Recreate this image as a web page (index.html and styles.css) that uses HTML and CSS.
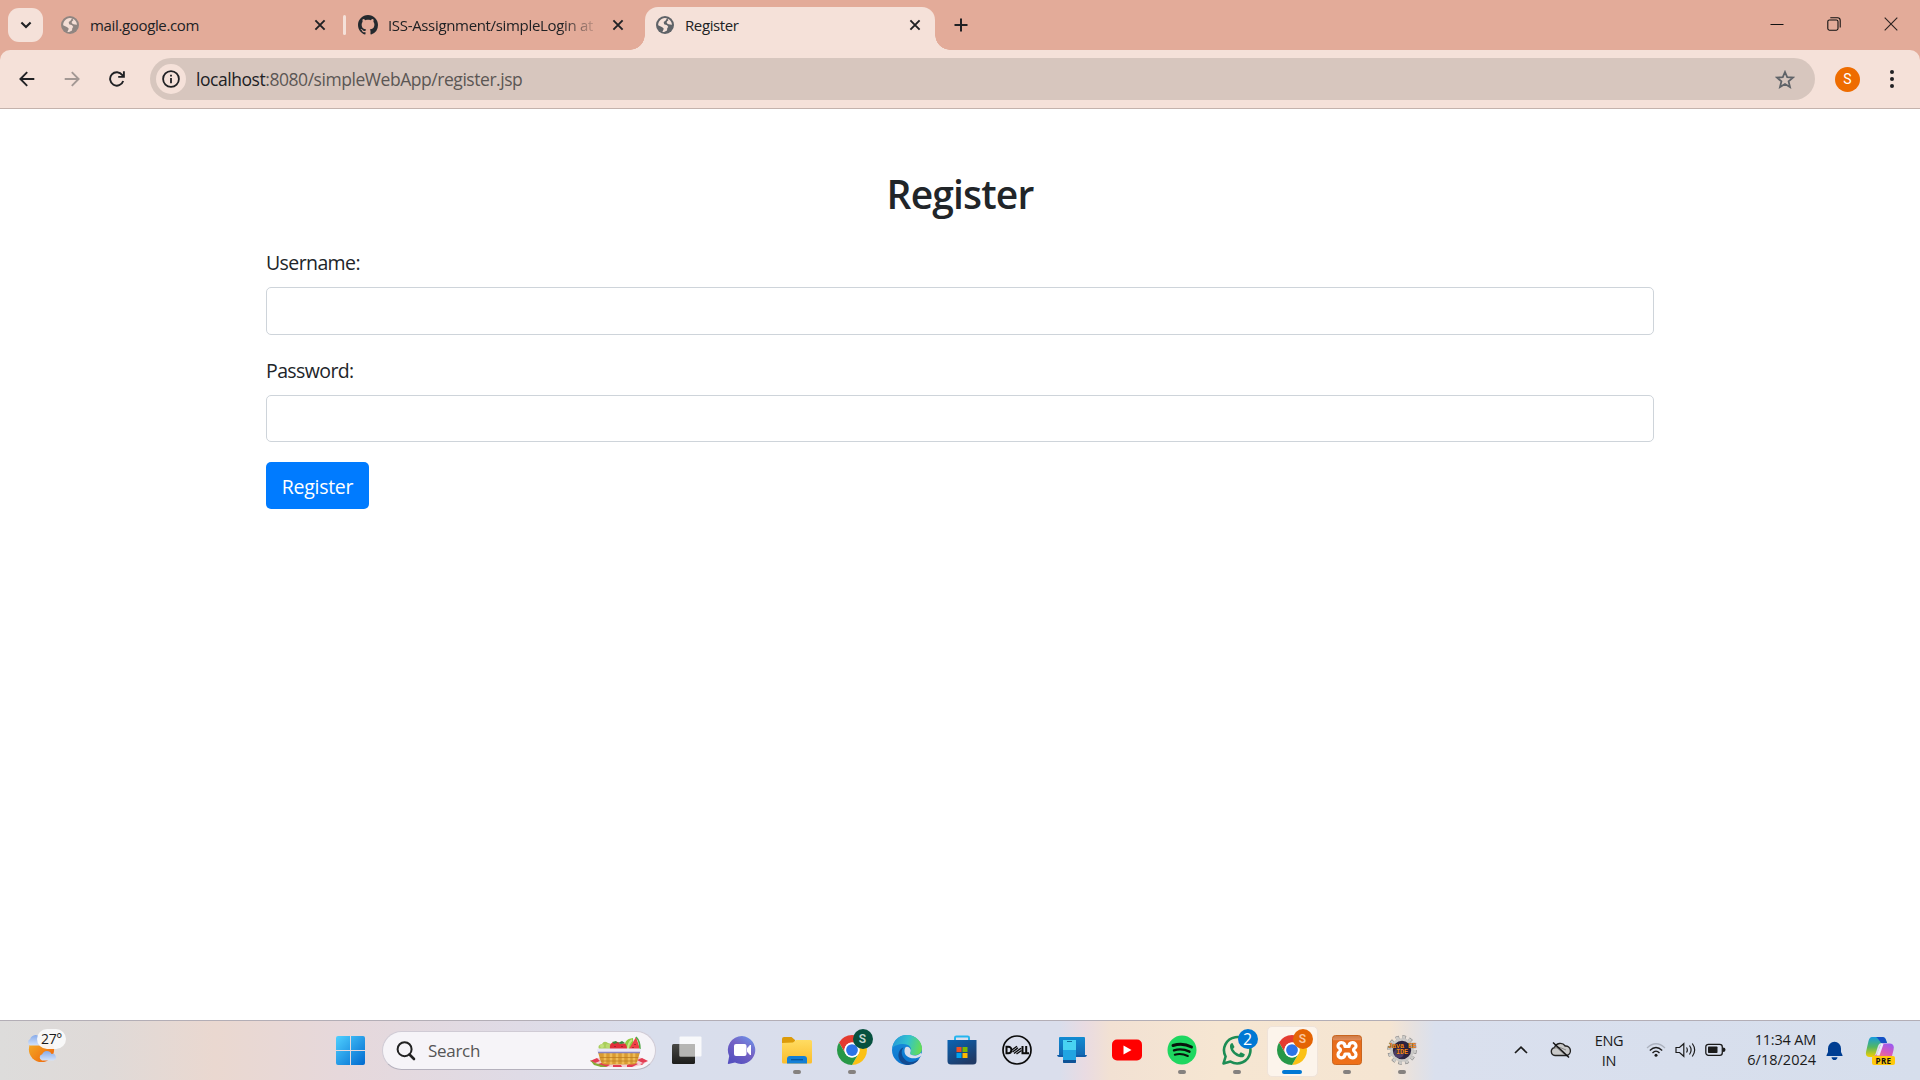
FILE: index.html
```html
<!DOCTYPE html>
<html lang="en">
<head>
<meta charset="utf-8">
<title>Register</title>
<link rel="stylesheet" href="styles.css">
</head>
<body>
<svg class="defs" width="0" height="0" aria-hidden="true">
  <defs>
    <linearGradient id="win" x1="0" y1="0" x2="1" y2="1"><stop offset="0" stop-color="#4fd0ff"/><stop offset="1" stop-color="#0069cf"/></linearGradient>
    <linearGradient id="sun" x1="0" y1="0" x2="1" y2="1"><stop offset="0" stop-color="#f5b62c"/><stop offset="1" stop-color="#ee5f08"/></linearGradient>
    <linearGradient id="cloud" x1="0" y1="0" x2="0" y2="1"><stop offset="0" stop-color="#87abea"/><stop offset="1" stop-color="#d3e2fa"/></linearGradient>
    <linearGradient id="dark" x1="0" y1="0" x2="0" y2="1"><stop offset="0" stop-color="#484846"/><stop offset="1" stop-color="#1d1d1b"/></linearGradient>
    <linearGradient id="chat" x1="1" y1="0" x2="0.3" y2="1"><stop offset="0" stop-color="#6b9cf0"/><stop offset=".5" stop-color="#7563c5"/><stop offset="1" stop-color="#5650bf"/></linearGradient>
    <linearGradient id="folder" x1="0" y1="0" x2="0" y2="1"><stop offset="0" stop-color="#ffdc62"/><stop offset="1" stop-color="#fbbd2b"/></linearGradient>
    <linearGradient id="edgeTop" x1="0" y1="0.3" x2="1" y2="0.5"><stop offset="0" stop-color="#2699d9"/><stop offset=".5" stop-color="#32c2cf"/><stop offset="1" stop-color="#65dd55"/></linearGradient>
    <linearGradient id="edgeBody" x1="0" y1="0" x2="0" y2="1"><stop offset="0" stop-color="#1b8fdb"/><stop offset="1" stop-color="#0b73ce"/></linearGradient>
    <linearGradient id="store" x1="0" y1="0" x2="0.6" y2="1"><stop offset="0" stop-color="#0a64b4"/><stop offset="1" stop-color="#203a66"/></linearGradient>
    <linearGradient id="pc" x1="0" y1="0" x2="0" y2="1"><stop offset="0" stop-color="#118bd2"/><stop offset="1" stop-color="#1267b2"/></linearGradient>
    <linearGradient id="cop1" x1="0" y1="0" x2="0" y2="1"><stop offset="0" stop-color="#169bde"/><stop offset=".5" stop-color="#52b763"/><stop offset="1" stop-color="#f5d000"/></linearGradient>
    <linearGradient id="cop2" x1="0.8" y1="0" x2="0.3" y2="1"><stop offset="0" stop-color="#9a5bf0"/><stop offset=".5" stop-color="#d758bb"/><stop offset="1" stop-color="#fa8367"/></linearGradient>
    <linearGradient id="xampp" x1="0" y1="0" x2="0" y2="1"><stop offset="0" stop-color="#cc7a45"/><stop offset=".14" stop-color="#e08b58"/><stop offset=".18" stop-color="#e66c1c"/><stop offset="1" stop-color="#ef7018"/></linearGradient>
    <symbol id="globe" viewBox="0 0 18 18"><circle cx="9" cy="9" r="9" fill="currentColor"/><path class="globe-land" d="M8.8 1.9 11 2.2 9.7 4.6 7.7 5.9 8.1 8.2 11.1 9.2 12.3 10.9 11.3 12 11 14.6 8.1 16.1 6.4 15.9 7.8 12.8 6.3 11.2 2.2 9.3C1.9 5.6 4.9 2.1 8.8 1.9ZM11.4 2.6C14 3.5 15.9 6.1 16 8.8L14 8.5 11.7 8 10.6 6.5 11.1 5.2 12.4 4.2Z"/></symbol>
    <symbol id="close" viewBox="0 0 12 12"><path d="M1.4 1.4 10.6 10.6M10.6 1.4 1.4 10.6" stroke="#202124" stroke-width="1.9" fill="none"/></symbol>
    <symbol id="chrome" viewBox="0 0 48 48"><circle cx="24" cy="24" r="23" fill="#fff"/><path fill="#e43b30" d="M3.22 12A24 24 0 0 1 44.78 12H24A12 12 0 0 0 13.6 30Z"/><path fill="#fbc116" d="M44.78 12A24 24 0 0 1 24 48L34.4 30A12 12 0 0 0 24 12Z"/><path fill="#279847" d="M24 48A24 24 0 0 1 3.22 12L13.6 30A12 12 0 0 0 34.4 30Z"/><circle cx="24" cy="24" r="12" fill="#fff"/><circle cx="24" cy="24" r="9.4" fill="#2d74e8"/></symbol>
  </defs>
</svg>

<header class="browser">
  <div class="tabstrip">
    <button class="tab-search"><svg width="12" height="8" viewBox="0 0 12 8"><path d="M1.4 1.4 6 6 10.6 1.4" fill="none" stroke="#202124" stroke-width="2.1"/></svg></button>
    <div class="tab tab-mail">
      <svg class="favicon muted" width="18" height="18"><use href="#globe"/></svg>
      <span class="tab-title t-mail">mail.google.com</span>
      <svg class="tab-close" width="12" height="12"><use href="#close"/></svg>
    </div>
    <i class="tab-sep"></i>
    <div class="tab tab-git">
      <svg class="favicon" width="20" height="20" viewBox="0 0 16 16"><path fill="#24292e" d="M8 0C3.58 0 0 3.58 0 8c0 3.54 2.29 6.53 5.47 7.59.4.07.55-.17.55-.38 0-.19-.01-.82-.01-1.49-2.01.37-2.53-.49-2.69-.94-.09-.23-.48-.94-.82-1.13-.28-.15-.68-.52-.01-.53.63-.01 1.08.58 1.23.82.72 1.21 1.87.87 2.33.66.07-.52.28-.87.51-1.07-1.78-.2-3.64-.89-3.64-3.95 0-.87.31-1.59.82-2.15-.08-.2-.36-1.02.08-2.12 0 0 .67-.21 2.2.82.64-.18 1.32-.27 2-.27s1.36.09 2 .27c1.53-1.04 2.2-.82 2.2-.82.44 1.1.16 1.92.08 2.12.51.56.82 1.27.82 2.15 0 3.07-1.87 3.75-3.65 3.95.29.25.54.73.54 1.48 0 1.07-.01 1.93-.01 2.2 0 .21.15.46.55.38A8.01 8.01 0 0 0 16 8c0-4.42-3.58-8-8-8z"/></svg>
      <span class="tab-title t-git">ISS-Assignment/simpleLogin at</span>
      <svg class="tab-close" width="12" height="12"><use href="#close"/></svg>
    </div>
    <div class="tab tab-active">
      <svg class="favicon" width="18" height="18"><use href="#globe"/></svg>
      <span class="tab-title t-reg">Register</span>
      <svg class="tab-close" width="12" height="12"><use href="#close"/></svg>
    </div>
    <svg class="new-tab" width="14" height="14" viewBox="0 0 14 14"><path d="M7 .5V13.5M.5 7H13.5" stroke="#202124" stroke-width="2"/></svg>
    <div class="window-controls">
      <svg width="14" height="14" viewBox="0 0 14 14"><path d="M.5 7.5H13.5" stroke="#111"/></svg>
      <svg width="14" height="14" viewBox="0 0 14 14" fill="none" stroke="#111" stroke-width="1.1"><rect x=".8" y="3" width="10.2" height="10.2" rx="1.6"/><path d="M3.3 .8H10.6Q13.2 .8 13.2 3.4V10.6"/></svg>
      <svg width="14" height="14" viewBox="0 0 14 14"><path d="M.7 .7 13.3 13.3M13.3 .7 .7 13.3" stroke="#2a2220" stroke-width="1.1"/></svg>
    </div>
  </div>
  <div class="toolbar">
    <nav class="nav-buttons">
      <svg width="16" height="16" viewBox="0 0 16 16" fill="none" stroke="#202124" stroke-width="1.9"><path d="M15.3 8H1.5M8.2 1.2 1.4 8 8.2 14.8"/></svg>
      <svg width="16" height="16" viewBox="0 0 16 16" fill="none" stroke="#a39894" stroke-width="1.9"><path d="M.7 8H14.500M7.800 1.200 14.600 8 7.800 14.800"/></svg>
      <svg width="16" height="16" viewBox="0 0 16 16" fill="none" stroke="#202124" stroke-width="1.9"><path d="M14.200 10A6.700 6.700 0 1 1 13.300 4.100L14.700 5.600M14.900 .3V5.900H9.200"/></svg>
    </nav>
    <div class="omnibox">
      <span class="site-info"><svg width="18" height="18" viewBox="0 0 18 18"><circle cx="9" cy="9" r="7.9" fill="none" stroke="#202124" stroke-width="1.8"/><path d="M9 8V13.2M9 4.8V6.6" stroke="#202124" stroke-width="1.8"/></svg></span>
      <span class="url"><b>localhost</b>:8080/simpleWebApp/register.jsp</span>
      <svg class="star" width="20" height="19" viewBox="0 0 20 19"><path d="M10 2 12.200 7.100 18 7.600 13.600 11.400 15 17 10 14 5 17 6.400 11.400 2 7.600 7.800 7.100Z" fill="none" stroke="#5f6368" stroke-width="1.800"/></svg>
    </div>
    <span class="avatar">S</span>
    <svg class="menu" width="6" height="20" viewBox="0 0 6 20" fill="#202124"><circle cx="3" cy="3" r="2"/><circle cx="3" cy="10" r="2"/><circle cx="3" cy="17" r="2"/></svg>
  </div>
</header>

<main class="page">
  <form class="register-form">
    <h2>Register</h2>
    <label for="username" class="l-user">Username:</label>
    <input id="username" type="text">
    <label for="password" class="l-pass">Password:</label>
    <input id="password" type="password">
    <button type="button">Register</button>
  </form>
</main>

<footer class="taskbar">
  <div class="weather">
    <svg width="32" height="30" viewBox="0 0 32 30"><circle cx="15.500" cy="15.500" r="12.600" fill="url(#sun)"/><path d="M4 11.500a3.600 3.600 0 0 1 .2-6.500A6 6 0 0 1 15 4l1 7.500Z" fill="url(#cloud)"/><path d="M16 26.500a3.200 3.200 0 0 1 .2-6.200 5 5 0 0 1 9.300-.3 3.300 3.300 0 0 1 2 6.500Z" fill="url(#cloud)"/></svg>
    <span class="temp">27°</span>
  </div>
  <svg class="start" width="29" height="29" viewBox="0 0 29 29"><g fill="url(#win)"><path d="M2 0H14V14H0V2Q0 0 2 0ZM15 0H27Q29 0 29 2V14H15ZM0 15H14V29H2Q0 29 0 27ZM15 15H29V27Q29 29 27 29H15Z"/></g></svg>
  <div class="search">
    <svg width="20" height="20" viewBox="0 0 20 20" fill="none" stroke="#222"><circle cx="8.600" cy="8.200" r="7" stroke-width="2"/><path d="M13.500 13.500 18 18" stroke-width="2.600" stroke-linecap="round"/></svg>
    <span>Search</span>
    <svg class="basket" width="60" height="32" viewBox="0 0 60 32">
      <path d="M1 25 12 21H50L59 25 53 29 44 31H18L8 29Z" fill="#f3cdd3"/>
      <path d="M1 25l7-3 3 3-5 2zM9 28l7-2 5 3-4 2h-5zM24 29h8l1 2h-9zM38 29l6-3 5 2-6 3h-5zM48 24l5-2 6 3-5 2zM51 28l4-1-2 2z" fill="#e33c53"/>
      <path d="M1 24 6 27 19 31H12L5 29Z" fill="#84aa36"/>
      <path d="M10 13Q8 9 13 8 15 4 19 7 25 8 24 14Z" fill="#a9ce5c"/>
      <circle cx="13" cy="10" r="2" fill="#c3e07c"/><circle cx="19" cy="10" r="2.300" fill="#bada6f"/>
      <path d="M36 13Q34 3 44 2L45 13Z" fill="#8fcb41"/><path d="M39 13Q39 7 43 4" stroke="#c9e886" stroke-width="2" fill="none"/>
      <path d="M47 1 51 13H40Z" fill="#ef3f46"/><path d="M47 1Q51 5 51 13" stroke="#51a844" stroke-width="1.600" fill="none"/>
      <path d="M21 13Q20 6 26 6 30 5 31 8 38 5 38 13Z" fill="#e2303c"/><path d="M23 6l4-1 2 2 4-2 3 2-4 1-4-1-3 1z" fill="#39873a"/>
      <path d="M26 10v1M33 10v1M46 8v1M44 11v1" stroke="#641922"/>
      <path d="M9 16H51L48.500 25Q47 28.500 44 28.500H16Q13 28.500 11.500 25Z" fill="#d99b33"/>
      <path d="M16 17V27M22 17V28M28 17V28M34 17V28M40 17V28M45 17V27" stroke="#efbb55" stroke-width="2.600"/>
      <path d="M11 21.500H49M12 25H48" stroke="#b8781f" stroke-width=".7"/>
      <rect x="8" y="12.500" width="44" height="4" rx="1.500" fill="#e9e6f7"/><path d="M9 16.500H51" stroke="#8984c0" stroke-width="1.600"/>
    </svg>
  </div>
  <div class="apps">
    <div class="app"><svg width="30" height="30" viewBox="0 0 30 30"><rect x="0" y="9" width="23" height="20" rx="1.500" fill="url(#dark)"/><rect x="7.500" y="1.500" width="22" height="20" rx="1" fill="#fff" fill-opacity=".8"/><path d="M7.500 9H23V21.500H7.500Z" fill="#a9a9a7" fill-opacity=".75"/></svg></div>
    <div class="app"><svg width="30" height="30" viewBox="0 0 30 30"><path d="M15 1A14 14 0 1 1 8 27.500L1.500 29Q.4 29 1 27.500L2.200 21A14 14 0 0 1 15 1Z" fill="url(#chat)"/><rect x="7" y="9" width="12.500" height="12" rx="2" fill="#fff"/><path d="M20.500 13.200 23.500 10V20L20.500 16.800Z" fill="#fff" stroke="#fff" stroke-linejoin="round"/></svg></div>
    <div class="app"><svg width="30" height="30" viewBox="0 0 30 30"><path d="M0 4Q0 2 2 2H9.500L13 5V8H0Z" fill="#dc9b0a"/><path d="M0 8 11 7.500 14 5H28.500Q30 5 30 6.500V27Q30 28.500 28.500 28.500H1.500Q0 28.500 0 27Z" fill="url(#folder)"/><path d="M5 28.500V24Q5 21 8 21H22Q25 21 25 24V28.500Z" fill="#137fd6"/><path d="M9 24.700H21" stroke="#07579e" stroke-width="1.300"/></svg><i class="running"></i></div>
    <div class="app"><svg width="30" height="30"><use href="#chrome"/></svg><span class="badge green">S</span><i class="running"></i></div>
    <div class="app"><svg width="30" height="30" viewBox="0 0 30 30"><circle cx="15" cy="15" r="15" fill="url(#edgeBody)"/><path d="M.2 13.500C1.500 4 8 0 15 0 24 0 30 6.500 30 13.500 30 18 26.500 20.200 22.800 20.200 19 20.200 17.600 18.600 18.300 17.500 20.800 13.300 17.500 9 11 9 6 9 2 10.500.2 13.500Z" fill="url(#edgeTop)"/><path d="M11.500 12.500C8.500 16 9.500 21 13 24.500 17 28.500 23 27.500 27.500 23.500 25 28 20 30 15 30 8 29 5 22 7 17 8 14.500 9.500 13 11.500 12.500Z" fill="#124b92"/><path d="M18.200 17.800C17.400 20.300 24 22.300 28.700 18 31 19 30 20 28.200 21.500 25 24 18 24 14.800 21 12 18.500 12 15 13.300 12.500 15 10.500 20.500 13 18.200 17.800Z" fill="#dadeec"/></svg></div>
    <div class="app"><svg width="30" height="30" viewBox="0 0 30 30"><path d="M8 6V2.800Q8 1.500 9.300 1.500H20.700Q22 1.500 22 2.800V6" fill="none" stroke="#25b5ef" stroke-width="2"/><path d="M.5 5H29.500V26Q29.500 29.500 26 29.500H4Q.5 29.500.5 26Z" fill="url(#store)"/><path d="M9.500 12H14.500V17H9.500Z" fill="#f25022"/><path d="M15.500 12H20.500V17H15.500Z" fill="#7fba00"/><path d="M9.500 18H14.500V23H9.500Z" fill="#00a4ef"/><path d="M15.500 18H20.500V23H15.500Z" fill="#ffb900"/></svg></div>
    <div class="app"><svg width="30" height="30" viewBox="0 0 30 30"><circle cx="15" cy="15" r="14" fill="none" stroke="#0b0b0b" stroke-width="1.700"/><g fill="none" stroke="#0b0b0b" stroke-width="2"><path d="M4.500 11.800V18.200H6.200Q9.400 18.200 9.400 15T6.200 11.800ZM20.500 11V18.200H23.300M24.200 11V18.200H27"/><path d="M9.800 15 15 11.200M10.500 17 16 12.800M12 18.500 19 13.200M14.500 19 19.500 15.500" stroke-width="1.400"/></g></svg></div>
    <div class="app"><svg width="30" height="30" viewBox="0 0 30 30"><rect x="2" y="2" width="26" height="19" rx="1" fill="url(#pc)"/><path d="M0 20H30Q29.500 22 28 22H2Q.5 22 0 20Z" fill="#0f5ca8"/><rect x="6" y="5" width="13" height="23" rx="1.200" fill="#21a5e2"/><path d="M6 5H19V15H6Z" fill="#48d3f2"/><path d="M6 25H19V27Q19 28 18 28H7Q6 28 6 27Z" fill="#0e5296"/><path d="M10 6.500H15" stroke="#126a9c"/></svg></div>
    <div class="app"><svg width="30" height="30" viewBox="0 0 30 30"><rect y="4.500" width="30" height="21" rx="5" fill="#f00"/><path d="M11.500 10.500 19.500 15 11.500 19.500Z" fill="#fff"/></svg></div>
    <div class="app"><svg width="30" height="30" viewBox="0 0 30 30"><circle cx="15" cy="15" r="14.500" fill="#1ed760"/><g fill="none" stroke="#08150c" stroke-linecap="round"><path d="M6 10.500Q16 7.500 24.500 12" stroke-width="2.900"/><path d="M7 15.300Q15 13 22.500 16.700" stroke-width="2.400"/><path d="M7.800 19.700Q14.500 18 20.800 21" stroke-width="2"/></g></svg><i class="running"></i></div>
    <div class="app"><svg width="30" height="30" viewBox="0 0 30 30"><path d="M1.500 28.500 3.600 21.500A13.200 13.200 0 1 1 8.500 26.600Z" fill="none" stroke="#1d8d54" stroke-width="2.600" stroke-linejoin="round"/><path d="M10.500 8 12.500 12 11 14Q13 18 17 19.300L18.800 17.300 22.800 19.200C22.500 22 20.500 22.500 18.500 22.200 13 21.500 8.500 16.500 8 12 7.800 9.500 9 8 10.500 8Z" fill="#1d8d54"/></svg><span class="badge blue">2</span><i class="running"></i></div>
    <div class="app active"><svg width="30" height="30"><use href="#chrome"/></svg><span class="badge orange">S</span><i class="running current"></i></div>
    <div class="app"><svg width="30" height="30" viewBox="0 0 30 30"><rect x=".5" y=".5" width="29" height="29" rx="3" fill="url(#xampp)" stroke="#c9651f"/><path d="M13 11.500C13 6.500 6 6.500 6 11 6 14 8.500 13 8.500 15S6 16.500 6 19.500C6 24 13 24 13 19H17C17 24 24 24 24 19.500 24 16.500 21.500 17 21.500 15S24 14 24 11C24 6.500 17 6.500 17 11.500Z" fill="none" stroke="#fff" stroke-width="3.200" stroke-linejoin="round"/></svg><i class="running"></i></div>
    <div class="app"><svg width="30" height="30" viewBox="0 0 30 30"><circle cx="15" cy="15" r="12.800" fill="none" stroke="#7f7f7f" stroke-width="3.800" stroke-dasharray="3.500 3.200"/><circle cx="15" cy="15" r="12.800" fill="none" stroke="#cccbc8" stroke-width="2.800" stroke-dasharray="3.100 3.600"/><circle cx="15" cy="15" r="10.500" fill="#2b2440" stroke="#cac9c6" stroke-width="2.600"/><circle cx="12" cy="18" r="5" fill="#4c3d69"/></svg><span class="java">Java EE<br>IDE</span><i class="running"></i></div>
  </div>
  <div class="tray">
    <svg class="chevron" width="14" height="8" viewBox="0 0 14 8"><path d="M1 7 7 1.200 13 7" fill="none" stroke="#1b1b1b" stroke-width="1.700"/></svg>
    <svg class="onedrive" width="22" height="18" viewBox="0 0 22 18"><path d="M5 14.500A4 4 0 0 1 4.500 6.600 6 6 0 0 1 15.200 5 4.800 4.800 0 0 1 16.500 14.500Z" fill="#c9c9c9" stroke="#222" stroke-width="1.400"/><path d="M6 6 15 14M4.500 7Q10 5 16 9" fill="none" stroke="#888"/><path d="M3 1.500 19 16.500" stroke="#111" stroke-width="1.500"/></svg>
    <div class="lang">ENG<br>IN</div>
    <svg class="wifi" width="20" height="16" viewBox="0 0 20 16" fill="none" stroke="#1b1b1b" stroke-width="1.300"><path d="M1 6Q10-2.500 19 6" stroke="#adb3bf"/><path d="M3.800 8.500Q10 2.500 16.200 8.500M6.500 11Q10 7.300 13.500 11"/><circle cx="10" cy="13.200" r="1.500" fill="#1b1b1b" stroke="none"/></svg>
    <svg class="volume" width="22" height="16" viewBox="0 0 22 16" fill="none" stroke="#1b1b1b" stroke-width="1.200"><path d="M1 5.500H4.500L8.800 1.700V14.300L4.500 10.500H1ZM11.500 5.500Q13.200 8 11.500 10.500M14.500 3.500Q17.700 8 14.500 12.500M17.300 1.500Q22 8 17.300 14.500"/></svg>
    <svg class="battery" width="21" height="14" viewBox="0 0 21 14"><rect x=".8" y="1.300" width="16.500" height="11" rx="2.600" fill="none" stroke="#1b1b1b" stroke-width="1.300"/><rect x="3" y="3.500" width="9.500" height="6.600" rx=".8" fill="#1b1b1b"/><path d="M18 4.500Q20.500 4.500 20.500 6.800T18 9.100Z" fill="#1b1b1b"/></svg>
    <div class="clock"><span class="time">11:34 AM</span><span class="date">6/18/2024</span></div>
    <svg class="bell" width="17" height="19" viewBox="0 0 17 19" fill="#003e92"><path d="M2 7.500A6.500 6.800 0 0 1 15 7.500V11L16.500 14.200V15H.5V14.200L2 11ZM5.500 16.200H11.500Q11 19 8.500 19T5.500 16.200Z"/></svg>
    <div class="copilot">
      <svg width="30" height="24" viewBox="0 0 30 24"><path d="M7 1H17.500Q20 1 21 4L22 7H17Q14 7 13 10L10.500 18Q9.500 21 7 21H5Q0 21 1 16L3.500 5Q4.500 1 7 1Z" fill="url(#cop1)"/><path d="M11 1H17.500Q20 1 21 4L22 7H16Q13 2 11 1Z" fill="#1550c5"/><path d="M18 7.500H25Q30 8 28.500 14L27 20Q26 24 22.500 24H14Q10 24 8.500 20L11 19Q12.500 18 13 16L15 10Q16 7.500 18 7.500Z" fill="url(#cop2)"/><path d="M16 8H18.500L14.500 19.500H11.500Z" fill="#e9eafa"/></svg>
      <span>PRE</span>
    </div>
  </div>
</footer>
</body>
</html>
```
FILE: styles.css
```css
* { box-sizing: border-box; }

html, body { height: 100%; }

body {
  margin: 0;
  display: flex;
  flex-direction: column;
  overflow: hidden;
  background: #fff;
  color: #212529;
  font-family: "Open Sans", "Noto Sans", sans-serif;
}

svg { display: block; flex: none; }
button { border: 0; padding: 0; font: inherit; }
.defs { position: absolute; }

/* Browser chrome */
.browser { flex: none; background: #e3ab99; }

.tabstrip { display: flex; height: 50px; padding-left: 8px; }

.tab-search {
  display: flex;
  align-items: center;
  justify-content: center;
  width: 35px;
  height: 34px;
  margin-top: 8px;
  border-radius: 11px;
  background: #f5e1d9;
}

.tab { display: flex; align-items: center; height: 50px; }
.tab-mail { width: 300px; padding: 0 17px 0 18px; }
.tab-git { width: 299px; padding: 0 21px 0 12px; }

.tab-active {
  position: relative;
  width: 290px;
  height: 43px;
  margin-top: 7px;
  padding: 0 14px 7px 11px;
  border-radius: 13px 13px 0 0;
  background: #f5e1d9;
}

.tab-active::before,
.tab-active::after {
  content: "";
  position: absolute;
  bottom: 0;
  width: 15px;
  height: 15px;
}
.tab-active::before { left: -15px; background: radial-gradient(circle at 0 0, transparent 14.5px, #f5e1d9 15px); }
.tab-active::after { right: -15px; background: radial-gradient(circle at 100% 0, transparent 14.5px, #f5e1d9 15px); }

.favicon { color: #5f6368; }
.favicon.muted { color: #8c8480; }
.globe-land { fill: #f5e1d9; }
.muted .globe-land { fill: #e3ab99; }
.muted { opacity: .95; }

.tab-title {
  margin-left: 11px;
  color: #202124;
  font-size: 15px;
  line-height: 20px;
  white-space: nowrap;
}
.t-mail { letter-spacing: -.35px; }
.t-git {
  width: 212px;
  margin-left: 10px;
  letter-spacing: -.33px;
  -webkit-mask-image: linear-gradient(90deg, #000 172px, transparent 212px);
  mask-image: linear-gradient(90deg, #000 172px, transparent 212px);
}
.t-reg { letter-spacing: -.4px; }
.tab-close { margin-left: auto; }

.tab-sep {
  width: 3px;
  height: 20px;
  margin-top: 15px;
  border-radius: 2px;
  background: #f5e1d9;
}

.new-tab { margin: 18px 0 0 19px; }
.window-controls { display: flex; gap: 43px; margin: 17px 22px 0 auto; }

.toolbar {
  display: flex;
  align-items: center;
  height: 59px;
  padding-left: 19px;
  border-bottom: 1px solid #c4b2ac;
  border-radius: 10px 10px 0 0;
  background: #f5e1d9;
}

.nav-buttons { display: flex; gap: 29px; width: 131px; }

.omnibox {
  display: flex;
  align-items: center;
  width: 1665px;
  height: 42px;
  padding: 0 20px 0 6px;
  border-radius: 21px;
  background: #d7c6be;
}

.site-info {
  display: flex;
  align-items: center;
  justify-content: center;
  width: 30px;
  height: 30px;
  border-radius: 50%;
  background: #f5e1d9;
}

.url {
  margin-left: 10px;
  color: #5b5654;
  font-size: 17.5px;
  letter-spacing: -.45px;
}
.url b { color: #202124; font-weight: 400; }
.star { margin-left: auto; }

.avatar {
  width: 25px;
  height: 25px;
  margin-left: 20px;
  border-radius: 50%;
  background: #ee6c00;
  color: #fff;
  font: 14px/25px Roboto, sans-serif;
  text-align: center;
}
.menu { margin-left: 29px; }

/* Page */
.page { flex: 1; padding: 61px 266px 0; }
.register-form { display: flex; flex-direction: column; align-items: stretch; }

.register-form h2 {
  margin: 0 0 20px;
  font-size: 39px;
  font-weight: 600;
  line-height: 48px;
  letter-spacing: -.85px;
  text-align: center;
}

.register-form label {
  margin-bottom: 9px;
  font-size: 19.5px;
  line-height: 30px;
}
.l-user { margin-top: 10px; }
.l-user, .l-pass { letter-spacing: -.6px; }

.register-form input {
  height: 48px;
  margin: 0 0 21px;
  border: 1px solid #ced4da;
  border-radius: 5px;
  background: #fff;
}
.register-form .l-pass + input { height: 47px; margin-bottom: 20px; }

.register-form button {
  align-self: flex-start;
  width: 103px;
  height: 47px;
  border-radius: 5px;
  background: #007bff;
  color: #fff;
  font-size: 19.5px;
  letter-spacing: -.3px;
  line-height: 49px;
}

/* Taskbar */
.taskbar {
  display: flex;
  flex: none;
  height: 60px;
  border-top: 1px solid #b3aeb6;
  color: #1b1b1b;
  background: linear-gradient(90deg, #dddcdb 0, #dfdad8 100px, #ead8d0 215px, #e6d8db 340px, #dfdbe6 520px, #d9deec 650px, #dadeec 1060px, #e9dbe2 1085px, #f2e1d3 1110px, #f6e6d2 1220px, #f5e5d2 1390px, #e5e1e1 1415px, #dae0ee 1435px, #d6deec 1920px);
}

.weather { position: relative; width: 310px; padding: 13px 0 0 26px; }
.temp {
  position: absolute;
  left: 37px;
  top: 8px;
  width: 29px;
  height: 20px;
  border-radius: 10px;
  background: rgba(250, 250, 250, .94);
  font-size: 14px;
  letter-spacing: -.3px;
  line-height: 20px;
  text-align: center;
}

.start { margin: 15px 17px 0 26px; }

.search {
  display: flex;
  align-items: center;
  width: 274px;
  height: 39px;
  margin-top: 10px;
  padding-left: 13px;
  border: 1px solid #d0cbd5;
  border-bottom-color: #b5b1bd;
  border-radius: 20px;
  background: #f6f4f8;
}
.search span { margin-left: 12px; color: #555; font-size: 17px; letter-spacing: -.3px; }
.basket { margin: 3px 6px 0 auto; }

.apps { display: flex; margin-left: 3px; }
.app {
  position: relative;
  display: flex;
  justify-content: center;
  width: 55px;
  padding-top: 14px;
}
.active::before {
  content: "";
  position: absolute;
  left: 3px;
  top: 5px;
  width: 49px;
  height: 49px;
  border: 1px solid #efe3d9;
  border-radius: 5px;
  background: #fcf4eb;
}
.active svg { position: relative; }

.running {
  position: absolute;
  left: 23.5px;
  top: 49px;
  width: 8px;
  height: 4px;
  border-radius: 2px;
  background: #85817f;
}
.running.current { left: 17.5px; width: 20px; background: #0078d4; }

.badge {
  position: absolute;
  left: 28.5px;
  top: 8px;
  width: 20px;
  height: 20px;
  border-radius: 50%;
  color: #fff;
  font-size: 16px;
  line-height: 20px;
  text-align: center;
}
.green { background: #07513f; color: #c2d5cf; font: 600 12px/20px Roboto, sans-serif; }
.orange { background: #e46404; color: #fac69e; font: 600 12px/20px Roboto, sans-serif; }
.blue { background: #0078d4; }

.java {
  position: absolute;
  left: 13px;
  top: 22px;
  width: 30px;
  color: #f58a22;
  font: 700 7px/6px "Liberation Mono", monospace;
  letter-spacing: -.2px;
  text-align: center;
  text-shadow: 0 0 1px #000;
  white-space: nowrap;
}

.tray { display: flex; flex: 1; }
.chevron { margin: 25px 0 0 85px; }
.onedrive { margin: 20px 0 0 22px; }
.lang {
  width: 54px;
  margin: 10px 0 0 10px;
  font-size: 14.5px;
  letter-spacing: -.3px;
  line-height: 20px;
  text-align: center;
}
.wifi { margin: 21px 0 0 10px; }
.volume { margin: 21px 0 0 9px; }
.battery { margin: 22px 0 0 8px; }
.clock {
  display: flex;
  flex-direction: column;
  width: 80px;
  margin: 9px 0 0 10px;
  font-size: 14.5px;
  line-height: 20px;
  text-align: right;
}
.time { letter-spacing: -.2px; }
.date { letter-spacing: 0; }
.bell { margin: 20px 0 0 10px; }

.copilot { position: relative; margin: 15px 0 0 22px; }
.copilot span {
  position: absolute;
  left: 7px;
  bottom: 15px;
  width: 23px;
  height: 9px;
  border-radius: 2px;
  background: #ffc90a;
  color: #111;
  font-size: 8px;
  font-weight: 700;
  line-height: 9px;
  letter-spacing: .4px;
  text-align: center;
}
```
